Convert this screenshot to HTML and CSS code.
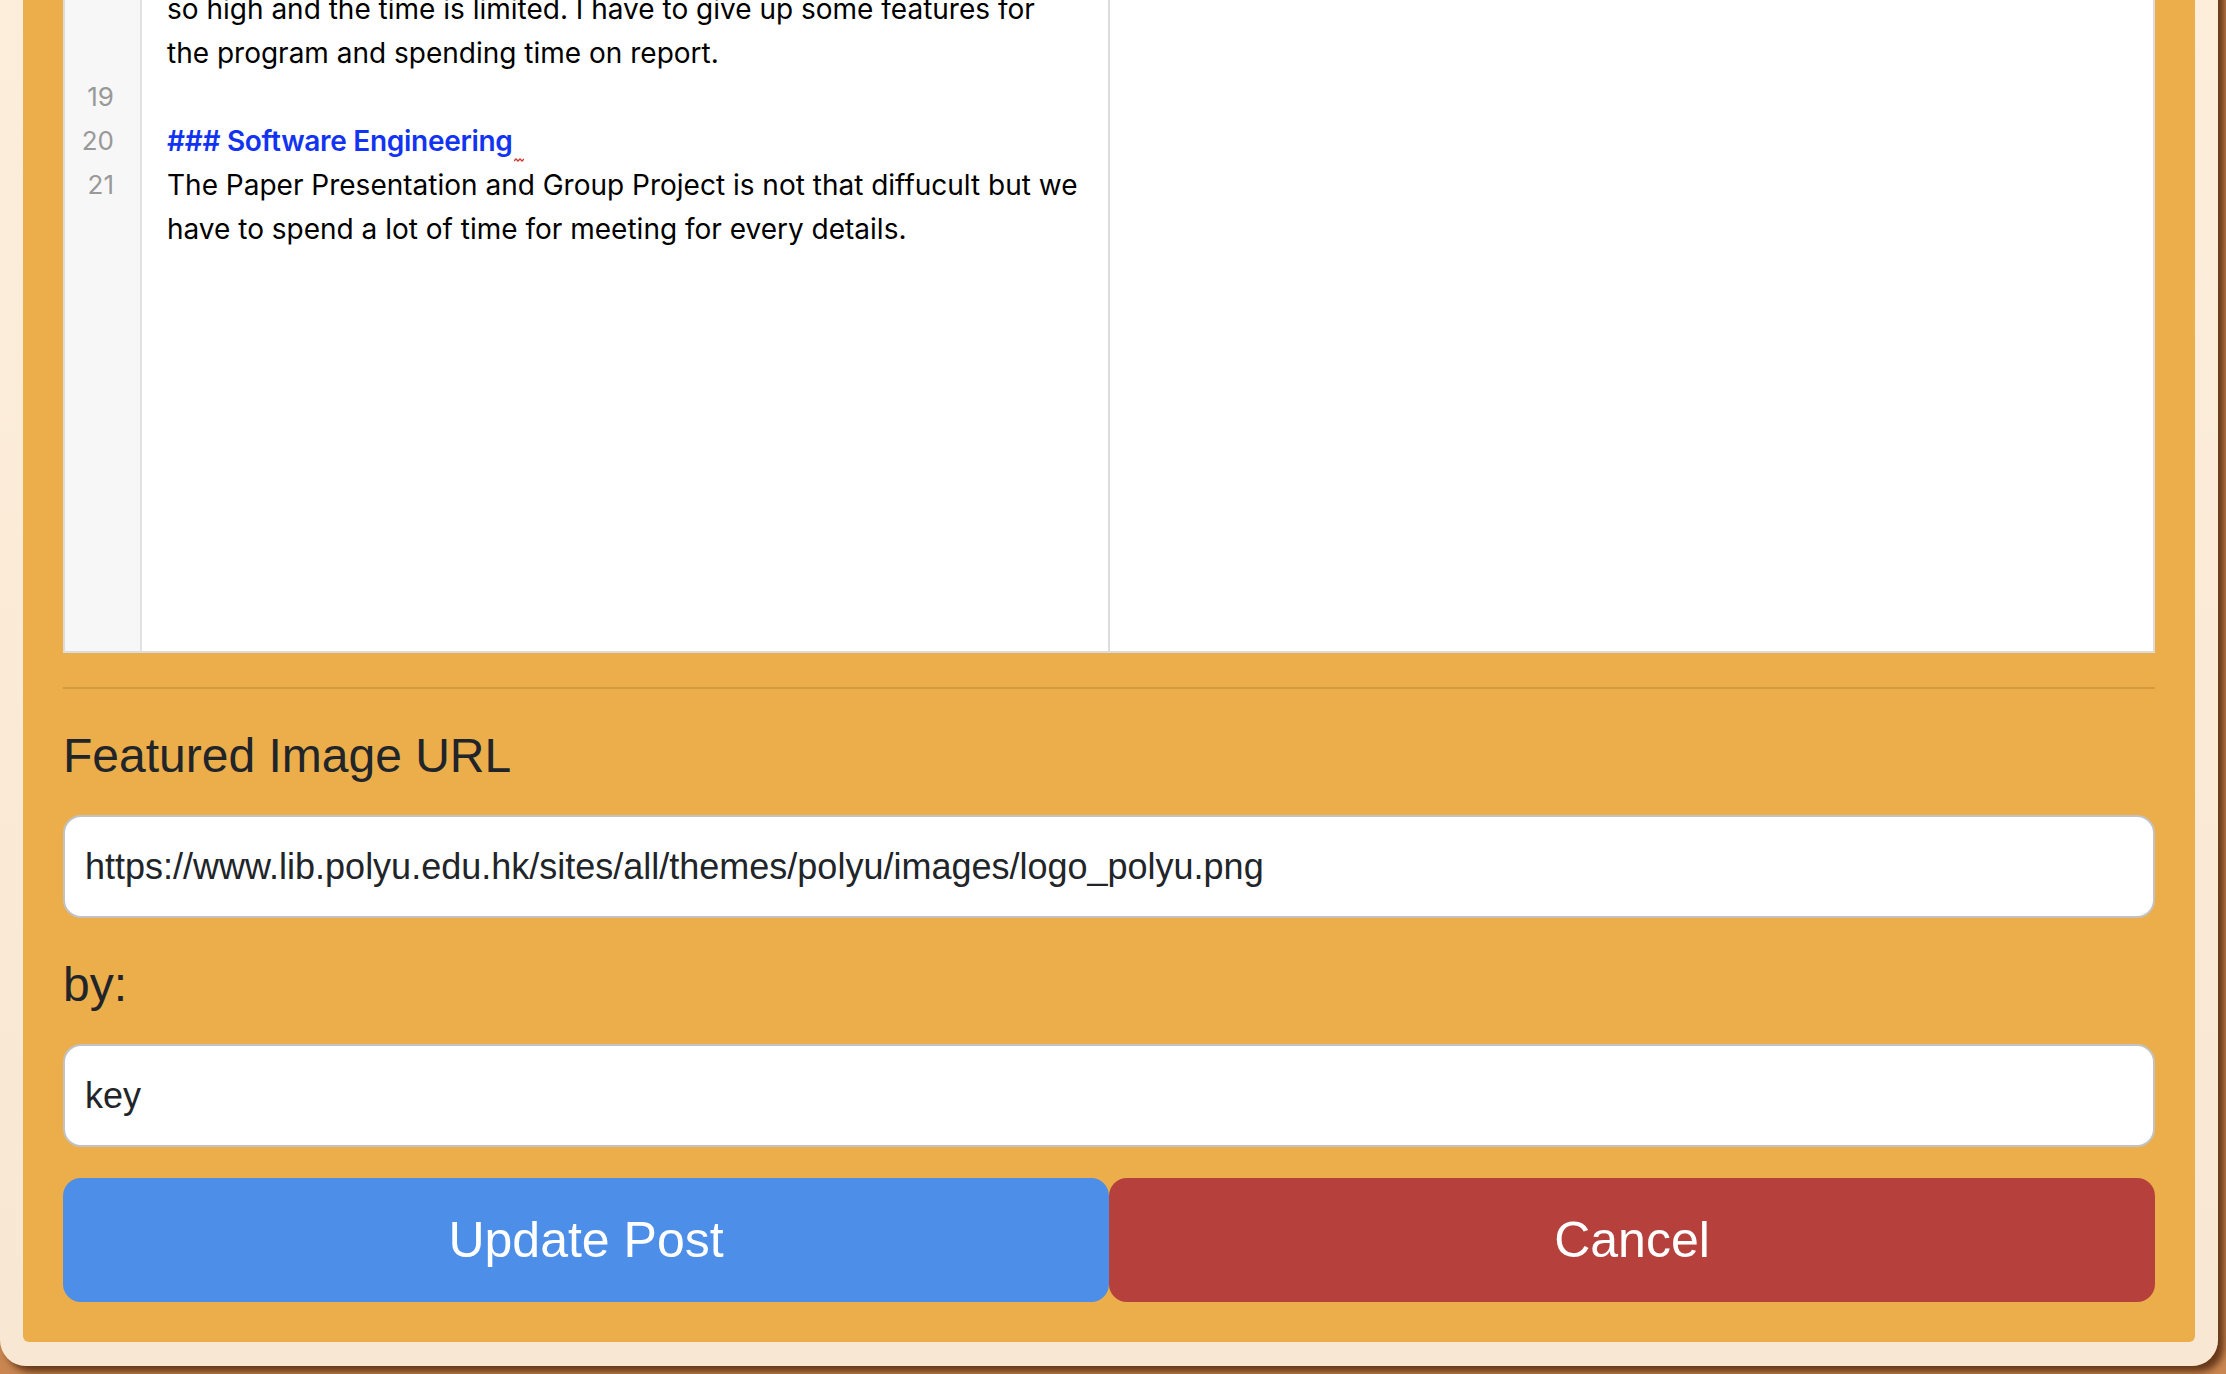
FILE: index.html
```html
<!DOCTYPE html>
<html lang="en">
<head>
<meta charset="utf-8">
<title>Edit Post</title>
<link rel="stylesheet" href="styles.css">
</head>
<body>
<div class="frame">
  <div class="card">
    <div class="editor">
      <div class="code-pane">
        <div class="gutter">
          <div class="lines">
            <div class="num"></div>
            <div class="num"></div>
            <div class="num">19</div>
            <div class="num">20</div>
            <div class="num">21</div>
            <div class="num"></div>
          </div>
        </div>
        <div class="code">
          <div class="lines">
            <div class="line">so high and the time is limited. I have to give up some features for</div>
            <div class="line">the program and spending time on report.</div>
            <div class="line"></div>
            <div class="line"><span class="header">### Software Engineering</span><svg class="squiggle" width="10" height="5" viewBox="0 0 10 5"><path d="M0 3 L2 1 L4 3 L6 1 L8 3 L10 1" fill="none" stroke="#d0392e" stroke-width="1.4"/></svg></div>
            <div class="line">The Paper Presentation and Group Project is not that diffucult but we</div>
            <div class="line">have to spend a lot of time for meeting for every details.</div>
          </div>
        </div>
      </div>
      <div class="preview"></div>
    </div>
    <hr class="divider">
    <label class="field-label" for="img">Featured Image URL</label>
    <input class="field-input" id="img" type="text" value="https://www.lib.polyu.edu.hk/sites/all/themes/polyu/images/logo_polyu.png">
    <label class="field-label" for="by">by:</label>
    <input class="field-input" id="by" type="text" value="key">
    <div class="actions">
      <button class="btn btn-primary" type="button">Update Post</button>
      <button class="btn btn-danger" type="button">Cancel</button>
    </div>
  </div>
</div>
</body>
</html>
```

FILE: styles.css
```css
html, body {
  margin: 0;
  padding: 0;
}

body {
  background: #c98651;
  width: 2226px;
  height: 1374px;
  overflow: hidden;
  font-family: "Liberation Sans", Arial, sans-serif;
}

.frame {
  width: 2218px;
  margin-top: -42px;
  box-sizing: border-box;
  padding: 0 23px 24px;
  background: linear-gradient(to bottom, #fdeedb, #f8e7d2);
  border-radius: 0 0 26px 26px;
  box-shadow: 6px 6px 7px rgba(95, 52, 22, 0.95);
}

.card {
  background: #ebae4a;
  border-radius: 0 0 6px 6px;
  padding: 40px;
}

.editor {
  display: flex;
  height: 655px;
  box-sizing: border-box;
  border: 2px solid #dcdcdc;
  background: #fff;
  overflow: hidden;
}

.code-pane {
  flex: 1 1 0;
  display: flex;
  min-width: 0;
}

.gutter {
  width: 75px;
  flex: none;
  background: #f7f7f7;
  border-right: 2px solid #e2e2e2;
}

.lines {
  margin-top: -13px;
}

.num {
  height: 44px;
  line-height: 44px;
  font-family: Inter, "Liberation Sans", sans-serif;
  font-size: 26px;
  color: #999;
  text-align: right;
  padding-right: 26px;
}

.code {
  flex: 1 1 0;
  min-width: 0;
  padding-left: 25px;
}

.line {
  height: 44px;
  line-height: 44px;
  font-family: Inter, "Liberation Sans", sans-serif;
  font-size: 28px;
  color: #000;
  white-space: nowrap;
}

.header {
  color: #1234f2;
  font-weight: 600;
  letter-spacing: -0.3px;
}

.squiggle {
  vertical-align: -12px;
  margin-left: 1px;
}

.preview {
  flex: 1 1 0;
  border-left: 2px solid #dcdcdc;
  background: #fff;
}

.divider {
  margin: 34px 0 0;
  height: 2px;
  border: none;
  background: #d49a3f;
}

.field-label {
  display: block;
  margin: 38px 0 30px;
  font-size: 48px;
  line-height: 58px;
  color: #212529;
}

.field-input {
  display: block;
  width: 100%;
  height: 103px;
  box-sizing: border-box;
  padding: 0 20px;
  border: 2px solid #c2c2c2;
  border-radius: 18px;
  background: #fff;
  font-family: "Liberation Sans", Arial, sans-serif;
  font-size: 36px;
  color: #212529;
  outline: none;
}

.actions {
  display: grid;
  grid-template-columns: 1fr 1fr;
  margin-top: 31px;
}

.btn {
  height: 124px;
  border: none;
  border-radius: 18px;
  color: #fff;
  font-family: "Liberation Sans", Arial, sans-serif;
  font-size: 50px;
  padding: 0;
}

.btn-primary {
  background: #4c8ee8;
}

.btn-danger {
  background: #b5403c;
}
```
